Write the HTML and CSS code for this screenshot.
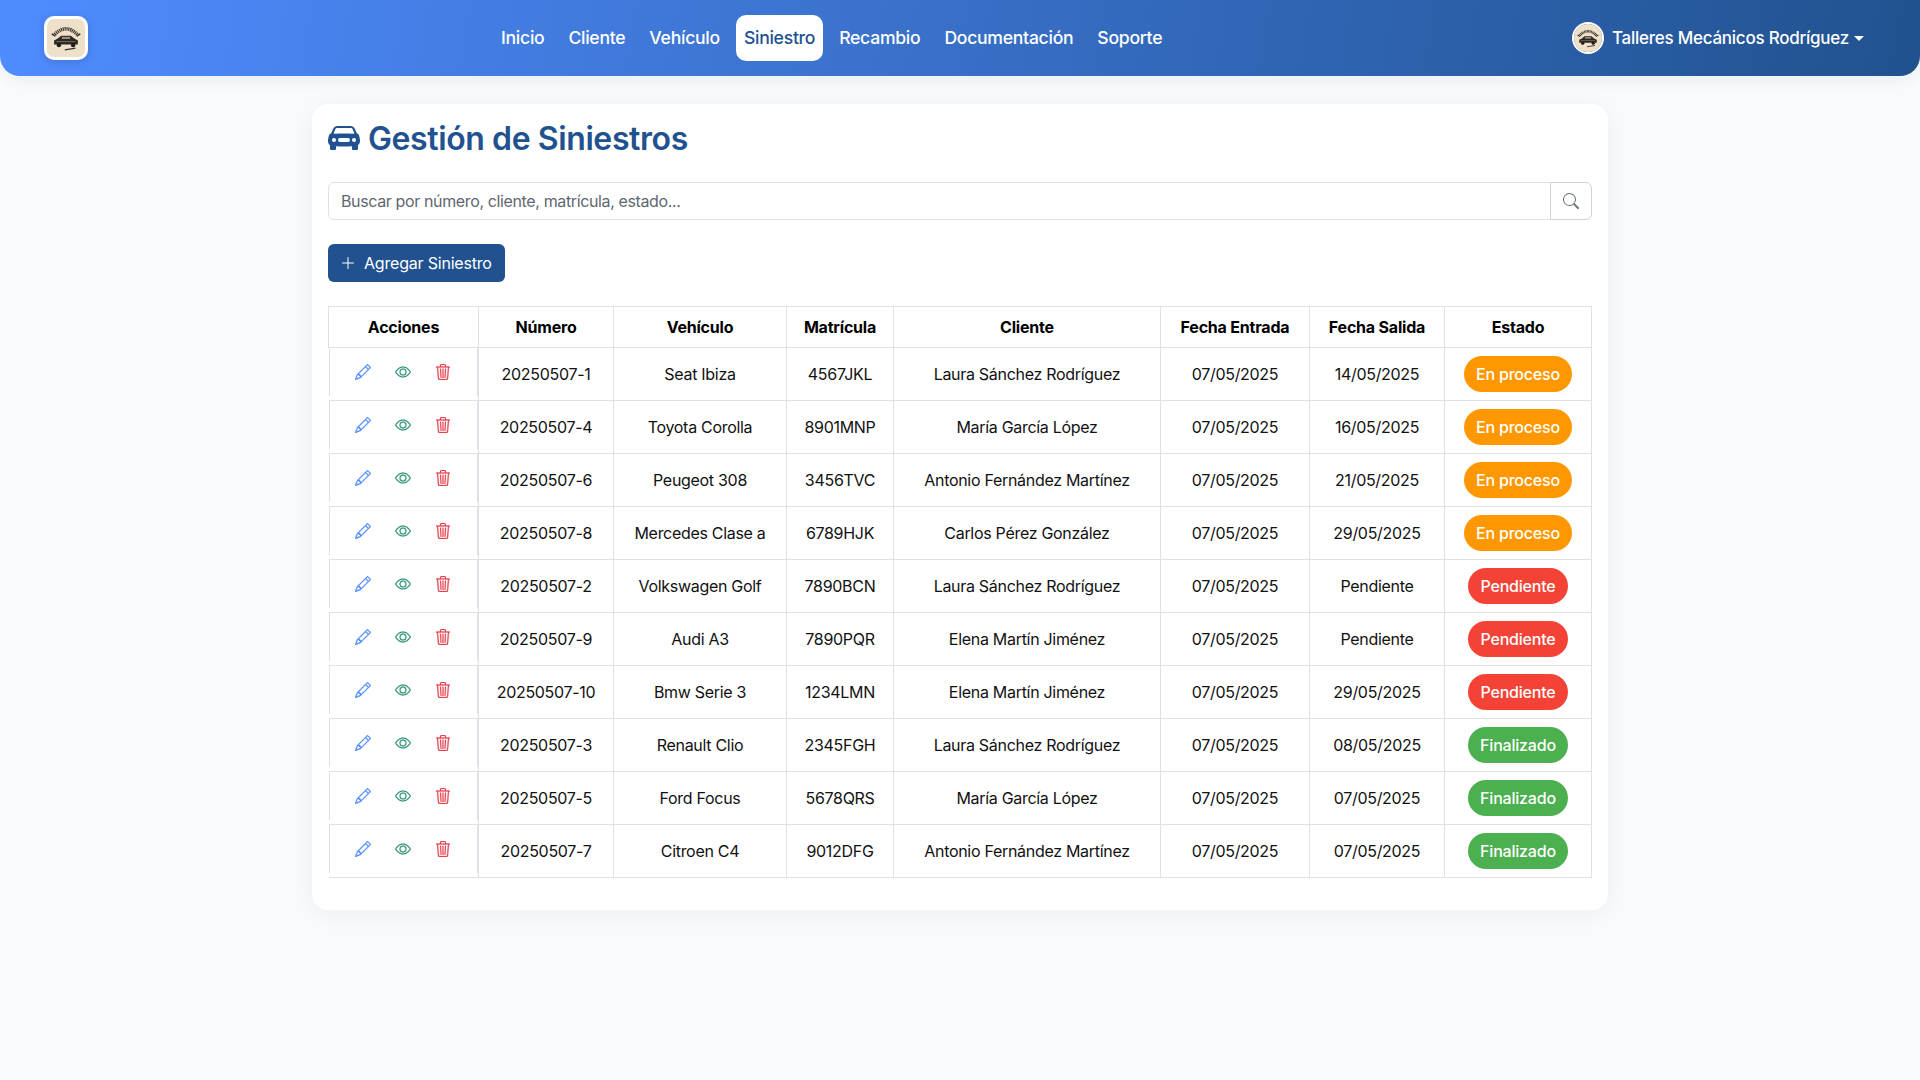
FILE: index.html
```html
<!DOCTYPE html>
<html lang="es">
<head>
    <meta charset="UTF-8">
    <title>Gestión de Siniestros</title>
    <link rel="stylesheet" href="styles.css">
</head>
<body>
    <svg class="sprites" xmlns="http://www.w3.org/2000/svg">
        <symbol id="i-pencil" viewBox="0 0 16 16"><path fill="currentColor" d="M12.146.146a.5.5 0 0 1 .708 0l3 3a.5.5 0 0 1 0 .708l-10 10a.5.5 0 0 1-.168.11l-5 2a.5.5 0 0 1-.65-.65l2-5a.5.5 0 0 1 .11-.168l10-10zM11.207 2.5 13.5 4.793 14.793 3.5 12.5 1.207 11.207 2.5zm1.586 3L10.5 3.207 4 9.707V10h.5a.5.5 0 0 1 .5.5v.5h.5a.5.5 0 0 1 .5.5v.5h.293l6.5-6.5zm-9.761 5.175-.106.106-1.528 3.821 3.821-1.528.106-.106A.5.5 0 0 1 5 12.5V12h-.5a.5.5 0 0 1-.5-.5V11h-.5a.5.5 0 0 1-.468-.325z"/></symbol>
        <symbol id="i-eye" viewBox="0 0 16 16"><path fill="currentColor" d="M16 8s-3-5.5-8-5.5S0 8 0 8s3 5.5 8 5.5S16 8 16 8zM1.173 8a13.133 13.133 0 0 1 1.66-2.043C4.12 4.668 5.88 3.5 8 3.5c2.12 0 3.879 1.168 5.168 2.457A13.133 13.133 0 0 1 14.828 8c-.058.087-.122.183-.195.288-.335.48-.83 1.12-1.465 1.755C11.879 11.332 10.119 12.5 8 12.5c-2.12 0-3.879-1.168-5.168-2.457A13.134 13.134 0 0 1 1.172 8z"/><path fill="currentColor" d="M8 5.5a2.5 2.5 0 1 0 0 5 2.5 2.5 0 0 0 0-5zM4.5 8a3.5 3.5 0 1 1 7 0 3.5 3.5 0 0 1-7 0z"/></symbol>
        <symbol id="i-trash" viewBox="0 0 16 16"><path fill="currentColor" d="M6.5 1h3a.5.5 0 0 1 .5.5v1H6v-1a.5.5 0 0 1 .5-.5ZM11 2.5v-1A1.5 1.5 0 0 0 9.5 0h-3A1.5 1.5 0 0 0 5 1.5v1H2.506a.58.58 0 0 0-.01 0H1.5a.5.5 0 0 0 0 1h.538l.853 10.66A2 2 0 0 0 4.885 16h6.23a2 2 0 0 0 1.994-1.84l.853-10.66h.538a.5.5 0 0 0 0-1h-.995a.59.59 0 0 0-.01 0H11Zm1.958 1-.846 10.58a1 1 0 0 1-.997.92h-6.23a1 1 0 0 1-.997-.92L3.042 3.5h9.916Zm-7.487 1a.5.5 0 0 1 .528.47l.5 8.5a.5.5 0 0 1-.998.06L5 5.03a.5.5 0 0 1 .47-.53Zm5.058 0a.5.5 0 0 1 .47.53l-.5 8.5a.5.5 0 1 1-.998-.06l.5-8.5a.5.5 0 0 1 .528-.47ZM8 4.5a.5.5 0 0 1 .5.5v8.5a.5.5 0 0 1-1 0V5a.5.5 0 0 1 .5-.5Z"/></symbol>
        <symbol id="i-logo" viewBox="0 0 32 32">
            <rect width="32" height="32" rx="5" fill="#efe0ca"/>
            <path d="M6.500 13Q16 3.500 25.500 13" fill="none" stroke="#3c362e" stroke-width="3" stroke-dasharray="1 .6"/>
            <path d="M4 12.500 7 14.500M28 12.500 25 14.500" stroke="#26231f" stroke-width="1.200"/>
            <path d="M6 18 9 16.500 12 14H20L23 16.500 26 18V21.500H6Z" fill="#2b2723"/>
            <rect x="12.500" y="15" width="7" height="1.800" fill="#9c917f"/>
            <rect x="8" y="18.500" width="16" height="1" fill="#6d6456"/>
            <circle cx="10" cy="22" r="1.800" fill="#1d1a17"/>
            <circle cx="22" cy="22" r="1.800" fill="#1d1a17"/>
            <path d="M15 26 24 24.500" stroke="#38322b" stroke-width="1"/>
        </symbol>
    </svg>

    <nav class="navbar">
        <a class="brand" href="#"><svg class="brand-img"><use href="#i-logo"/></svg></a>
        <ul class="nav-links">
            <li><a href="#">Inicio</a></li>
            <li><a href="#">Cliente</a></li>
            <li><a href="#">Vehículo</a></li>
            <li><a class="active" href="#">Siniestro</a></li>
            <li><a href="#">Recambio</a></li>
            <li><a href="#">Documentación</a></li>
            <li><a href="#">Soporte</a></li>
        </ul>
        <a class="user" href="#">
            <svg class="user-img"><use href="#i-logo"/></svg>
            <span>Talleres Mecánicos Rodríguez</span>
            <i class="caret"></i>
        </a>
    </nav>

    <main class="card">
        <h1>
            <svg class="title-icon" viewBox="0 0 16 16"><path fill="currentColor" d="M2.520 3.515A2.500 2.500 0 0 1 4.820 2h6.362c1 0 1.904.596 2.298 1.515l.792 1.848c.075.175.21.319.38.404.5.25.855.715.965 1.262l.335 1.679c.033.161.049.325.049.49v.413c0 .814-.39 1.543-1 1.997V13.500a.5.5 0 0 1-.5.5h-2a.5.5 0 0 1-.5-.5v-1.338c-1.292.048-2.745.088-4 .088s-2.708-.04-4-.088V13.500a.5.5 0 0 1-.5.5h-2a.5.5 0 0 1-.5-.5v-1.892c-.61-.454-1-1.183-1-1.997v-.413a2.500 2.500 0 0 1 .049-.49l.335-1.680c.11-.546.465-1.012.964-1.261a.807.807 0 0 0 .381-.404l.792-1.848ZM3 10a1 1 0 1 0 0-2 1 1 0 0 0 0 2Zm10 0a1 1 0 1 0 0-2 1 1 0 0 0 0 2ZM6 8a1 1 0 0 0 0 2h4a1 1 0 1 0 0-2H6ZM2.906 5.189a.51.51 0 0 0 .497.731c.91-.073 3.350-.17 4.597-.17 1.247 0 3.688.097 4.597.17a.51.51 0 0 0 .497-.731l-.956-1.913A.5.5 0 0 0 11.691 3H4.309a.5.5 0 0 0-.447.276L2.906 5.190Z"/></svg>
            Gestión de Siniestros
        </h1>

        <div class="search">
            <input type="text" placeholder="Buscar por número, cliente, matrícula, estado...">
            <button class="search-btn" type="button"><svg viewBox="0 0 16 16"><path fill="currentColor" d="M11.742 10.344a6.500 6.500 0 1 0-1.397 1.398h-.001c.03.04.062.078.098.115l3.850 3.850a1 1 0 0 0 1.415-1.414l-3.850-3.850a1.007 1.007 0 0 0-.115-.1zM12 6.500a5.500 5.500 0 1 1-11 0 5.500 5.500 0 0 1 11 0z"/></svg></button>
        </div>

        <button class="btn-add" type="button">
            <svg viewBox="0 0 16 16"><path fill="currentColor" d="M8 2a.5.5 0 0 1 .5.5v5h5a.5.5 0 0 1 0 1h-5v5a.5.5 0 0 1-1 0v-5h-5a.5.5 0 0 1 0-1h5v-5A.5.5 0 0 1 8 2Z"/></svg>
            Agregar Siniestro
        </button>

        <table class="tabla">
            <colgroup>
                <col class="c-acciones"><col class="c-numero"><col class="c-vehiculo"><col class="c-matricula">
                <col class="c-cliente"><col class="c-fecha-e"><col class="c-fecha-s"><col class="c-estado">
            </colgroup>
            <thead>
                <tr><th>Acciones</th><th>Número</th><th>Vehículo</th><th>Matrícula</th><th>Cliente</th><th>Fecha Entrada</th><th>Fecha Salida</th><th>Estado</th></tr>
            </thead>
            <tbody>
                <tr>
                    <td class="td-acciones"><div class="acciones"><svg class="ic azul"><use href="#i-pencil"/></svg><svg class="ic verde"><use href="#i-eye"/></svg><svg class="ic rojo"><use href="#i-trash"/></svg></div></td>
                    <td>20250507-1</td><td>Seat Ibiza</td><td>4567JKL</td><td>Laura Sánchez Rodríguez</td><td>07/05/2025</td><td>14/05/2025</td>
                    <td><span class="badge proceso">En proceso</span></td>
                </tr>
                <tr>
                    <td class="td-acciones"><div class="acciones"><svg class="ic azul"><use href="#i-pencil"/></svg><svg class="ic verde"><use href="#i-eye"/></svg><svg class="ic rojo"><use href="#i-trash"/></svg></div></td>
                    <td>20250507-4</td><td>Toyota Corolla</td><td>8901MNP</td><td>María García López</td><td>07/05/2025</td><td>16/05/2025</td>
                    <td><span class="badge proceso">En proceso</span></td>
                </tr>
                <tr>
                    <td class="td-acciones"><div class="acciones"><svg class="ic azul"><use href="#i-pencil"/></svg><svg class="ic verde"><use href="#i-eye"/></svg><svg class="ic rojo"><use href="#i-trash"/></svg></div></td>
                    <td>20250507-6</td><td>Peugeot 308</td><td>3456TVC</td><td>Antonio Fernández Martínez</td><td>07/05/2025</td><td>21/05/2025</td>
                    <td><span class="badge proceso">En proceso</span></td>
                </tr>
                <tr>
                    <td class="td-acciones"><div class="acciones"><svg class="ic azul"><use href="#i-pencil"/></svg><svg class="ic verde"><use href="#i-eye"/></svg><svg class="ic rojo"><use href="#i-trash"/></svg></div></td>
                    <td>20250507-8</td><td>Mercedes Clase a</td><td>6789HJK</td><td>Carlos Pérez González</td><td>07/05/2025</td><td>29/05/2025</td>
                    <td><span class="badge proceso">En proceso</span></td>
                </tr>
                <tr>
                    <td class="td-acciones"><div class="acciones"><svg class="ic azul"><use href="#i-pencil"/></svg><svg class="ic verde"><use href="#i-eye"/></svg><svg class="ic rojo"><use href="#i-trash"/></svg></div></td>
                    <td>20250507-2</td><td>Volkswagen Golf</td><td>7890BCN</td><td>Laura Sánchez Rodríguez</td><td>07/05/2025</td><td>Pendiente</td>
                    <td><span class="badge pendiente">Pendiente</span></td>
                </tr>
                <tr>
                    <td class="td-acciones"><div class="acciones"><svg class="ic azul"><use href="#i-pencil"/></svg><svg class="ic verde"><use href="#i-eye"/></svg><svg class="ic rojo"><use href="#i-trash"/></svg></div></td>
                    <td>20250507-9</td><td>Audi A3</td><td>7890PQR</td><td>Elena Martín Jiménez</td><td>07/05/2025</td><td>Pendiente</td>
                    <td><span class="badge pendiente">Pendiente</span></td>
                </tr>
                <tr>
                    <td class="td-acciones"><div class="acciones"><svg class="ic azul"><use href="#i-pencil"/></svg><svg class="ic verde"><use href="#i-eye"/></svg><svg class="ic rojo"><use href="#i-trash"/></svg></div></td>
                    <td>20250507-10</td><td>Bmw Serie 3</td><td>1234LMN</td><td>Elena Martín Jiménez</td><td>07/05/2025</td><td>29/05/2025</td>
                    <td><span class="badge pendiente">Pendiente</span></td>
                </tr>
                <tr>
                    <td class="td-acciones"><div class="acciones"><svg class="ic azul"><use href="#i-pencil"/></svg><svg class="ic verde"><use href="#i-eye"/></svg><svg class="ic rojo"><use href="#i-trash"/></svg></div></td>
                    <td>20250507-3</td><td>Renault Clio</td><td>2345FGH</td><td>Laura Sánchez Rodríguez</td><td>07/05/2025</td><td>08/05/2025</td>
                    <td><span class="badge finalizado">Finalizado</span></td>
                </tr>
                <tr>
                    <td class="td-acciones"><div class="acciones"><svg class="ic azul"><use href="#i-pencil"/></svg><svg class="ic verde"><use href="#i-eye"/></svg><svg class="ic rojo"><use href="#i-trash"/></svg></div></td>
                    <td>20250507-5</td><td>Ford Focus</td><td>5678QRS</td><td>María García López</td><td>07/05/2025</td><td>07/05/2025</td>
                    <td><span class="badge finalizado">Finalizado</span></td>
                </tr>
                <tr>
                    <td class="td-acciones"><div class="acciones"><svg class="ic azul"><use href="#i-pencil"/></svg><svg class="ic verde"><use href="#i-eye"/></svg><svg class="ic rojo"><use href="#i-trash"/></svg></div></td>
                    <td>20250507-7</td><td>Citroen C4</td><td>9012DFG</td><td>Antonio Fernández Martínez</td><td>07/05/2025</td><td>07/05/2025</td>
                    <td><span class="badge finalizado">Finalizado</span></td>
                </tr>
            </tbody>
        </table>
    </main>
</body>
</html>
```

FILE: styles.css
```css
* {
    box-sizing: border-box;
}
body {
    font-family: Inter, "Noto Sans", sans-serif;
    background-color: #f8fafc;
    color: #111;
    margin: 0;
    min-height: 1080px;
    font-size: 16px;
}
.sprites {
    display: none;
}
a {
    text-decoration: none;
}

/* barra superior */
.navbar {
    height: 76px;
    display: flex;
    align-items: center;
    padding: 0 56px 0 44px;
    background: linear-gradient(100deg, #4f8cff 0%, #21528f 100%);
    border-radius: 0 0 20px 20px;
    box-shadow: 0 4px 16px rgba(30, 60, 110, 0.06);
}
.brand {
    display: flex;
}
.brand-img {
    width: 44px;
    height: 44px;
    padding: 3px;
    background-color: #fff;
    border-radius: 10px;
    box-shadow: 0 2px 8px rgba(0, 0, 0, 0.15);
}
.nav-links {
    list-style: none;
    margin: 0 0 0 405px;
    padding: 0;
    display: flex;
    gap: 8px;
}
.nav-links a {
    display: block;
    padding: 12px 8px;
    height: 46px;
    color: #fff;
    font-weight: 500;
    font-size: 17.600px;
    line-height: 22px;
    letter-spacing: -0.27px;
    border-radius: 10px;
}
.nav-links a.active {
    background-color: #fff;
    color: #21528f;
}
.user {
    margin-left: auto;
    display: flex;
    align-items: center;
    color: #fff;
    font-weight: 500;
    font-size: 17px;
    letter-spacing: -0.25px;
}
.user-img {
    width: 32px;
    height: 32px;
    border: 2px solid #fff;
    border-radius: 50%;
    margin-right: 8px;
}
.caret {
    width: 0;
    height: 0;
    margin-left: 5px;
    border-top: 5px solid #fff;
    border-left: 5px solid transparent;
    border-right: 5px solid transparent;
}

/* tarjeta */
.card {
    width: 1296px;
    height: 806px;
    margin: 28px auto 0;
    padding: 16px;
    background-color: #fff;
    border-radius: 16px;
    box-shadow: 0 4px 24px rgba(30, 60, 110, 0.05);
}
h1 {
    margin: 0 0 24px;
    padding-bottom: 2px;
    display: flex;
    align-items: center;
    gap: 8px;
    height: 38px;
    font-size: 32px;
    font-weight: 600;
    letter-spacing: -0.4px;
    color: #21528f;
}
.title-icon {
    width: 32px;
    height: 32px;
}
.search {
    display: flex;
    height: 38px;
    margin-bottom: 24px;
}
.search input {
    flex: 1;
    padding: 6px 12px;
    font-family: inherit;
    font-size: 16px;
    letter-spacing: -0.37px;
    border: 1px solid #dee2e6;
    border-radius: 6px 0 0 6px;
    outline: none;
}
.search input::placeholder {
    color: #5f6771;
}
.search-btn {
    width: 42px;
    margin-left: -1px;
    padding: 0;
    display: flex;
    align-items: center;
    justify-content: center;
    color: #6c757d;
    background-color: #fff;
    border: 1px solid #ced4da;
    border-radius: 0 6px 6px 0;
}
.search-btn svg {
    width: 16px;
    height: 16px;
}
.btn-add {
    display: flex;
    align-items: center;
    gap: 8px;
    height: 38px;
    width: 177px;
    margin-bottom: 24px;
    padding: 0 12px;
    font-family: inherit;
    font-size: 16px;
    letter-spacing: -0.2px;
    color: #fff;
    background-color: #21528f;
    border: none;
    border-radius: 6px;
}
.btn-add svg {
    width: 16px;
    height: 16px;
}

/* tabla */
.tabla {
    width: 1263px;
    table-layout: fixed;
    border-collapse: collapse;
    font-size: 16px;
    letter-spacing: -0.3px;
}
.c-acciones { width: 150px; }
.c-numero { width: 135px; }
.c-vehiculo { width: 173px; }
.c-matricula { width: 107px; }
.c-cliente { width: 267px; }
.c-fecha-e { width: 149px; }
.c-fecha-s { width: 135px; }
.c-estado { width: 147px; }
.tabla th,
.tabla td {
    border: 1px solid #dee2e6;
    text-align: center;
    vertical-align: middle;
    padding: 0 4px;
}
.tabla th {
    height: 41px;
    font-weight: 700;
    letter-spacing: -0.2px;
    color: #000;
}
.tabla td {
    height: 53px;
}
.tabla .td-acciones {
    padding: 0;
    border-left: none;
    vertical-align: top;
}
.acciones {
    height: 48px;
    display: flex;
    justify-content: center;
    align-items: flex-start;
    gap: 24px;
    padding: 16px 0 0 0;
    border-left: 1px solid #dee2e6;
    border-right: 1px solid #dee2e6;
}
.ic {
    width: 16px;
    height: 16px;
    stroke: currentColor;
    stroke-width: 0.25;
}
.azul { color: #4f8cff; }
.verde { color: #2f9178; }
.rojo { color: #e63f4d; }

.badge {
    display: inline-block;
    padding: 8px 12px;
    border-radius: 18px;
    color: #fff;
    font-weight: 500;
    font-size: 16px;
    line-height: 20px;
    letter-spacing: -0.2px;
}
.proceso { background-color: #ff9800; }
.pendiente { background-color: #f44336; }
.finalizado { background-color: #4caf50; }
```
